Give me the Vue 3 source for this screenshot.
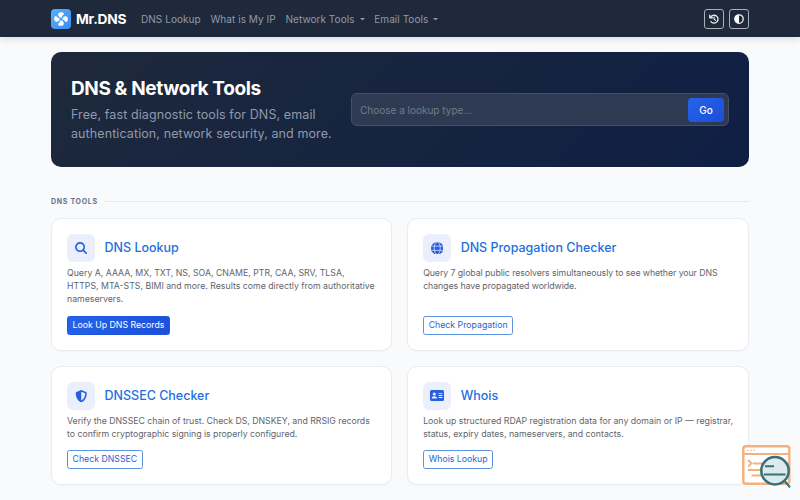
<script setup>
const cards = [
  { icon: 'search', title: 'DNS Lookup', tracking: 0, lines: ['Query A, AAAA, MX, TXT, NS, SOA, CNAME, PTR, CAA, SRV, TLSA,', 'HTTPS, MTA-STS, BIMI and more. Results come directly from authoritative', 'nameservers.'], action: 'Look Up DNS Records', primary: true },
  { icon: 'globe', title: 'DNS Propagation Checker', tracking: -0.065, lines: ['Query 7 global public resolvers simultaneously to see whether your DNS', 'changes have propagated worldwide.'], action: 'Check Propagation' },
  { icon: 'shield', title: 'DNSSEC Checker', tracking: -0.02, lines: ['Verify the DNSSEC chain of trust. Check DS, DNSKEY, and RRSIG records', 'to confirm cryptographic signing is properly configured.'], action: 'Check DNSSEC' },
  { icon: 'card', title: 'Whois', tracking: 0, lines: ['Look up structured RDAP registration data for any domain or IP — registrar,', 'status, expiry dates, nameservers, and contacts.'], action: 'Whois Lookup' }
]
</script>

<template>
  <div class="page">
    <header class="navbar">
      <a class="brand">
        <svg class="logo" viewBox="0 0 32 32">
          <defs>
            <linearGradient id="logo-fill" x1="0" y1="0" x2="1" y2="1">
              <stop offset="0" stop-color="#55b1fa" />
              <stop offset="1" stop-color="#3b8bee" />
            </linearGradient>
          </defs>
          <rect width="32" height="32" rx="6.5" fill="url(#logo-fill)" />
          <g fill="#fff">
            <path v-for="a in [0, 90, 180, 270]" :key="a" :transform="`rotate(${a} 16 16)`" d="M14.8 13.8C10.6 12.2 10.2 6.6 14.3 5.3C18.5 4.3 21.6 6.6 20.6 8.5C19.8 9.9 17.6 9.8 17.2 13.6Z" />
          </g>
        </svg>
        <span>Mr.DNS</span>
      </a>
      <nav class="links">
        <a>DNS Lookup</a>
        <a>What is My IP</a>
        <a>Network Tools<i class="caret"></i></a>
        <a>Email Tools<i class="caret"></i></a>
      </nav>
      <div class="tools">
        <button class="tool" aria-label="History">
          <svg viewBox="0 0 16 16" fill="none" stroke="currentColor" stroke-width="2" stroke-linecap="round" stroke-linejoin="round">
            <path d="M2.6 5.2A6.3 6.3 0 1 1 3.2 12.1" />
            <path d="M1.3 1.8V6H5.5" />
            <path d="M8.1 4.6V8.2L10.4 10.2" stroke-width="1.7" />
          </svg>
        </button>
        <button class="tool" aria-label="Theme">
          <svg viewBox="0 0 16 16">
            <circle cx="8" cy="8" r="6.8" fill="none" stroke="currentColor" stroke-width="2" />
            <path d="M8 1.2A6.8 6.8 0 0 0 8 14.8Z" fill="currentColor" />
          </svg>
        </button>
      </div>
    </header>

    <main class="container">
      <section class="hero">
        <div class="intro">
          <h1>DNS &amp; Network Tools</h1>
          <p>Free, fast diagnostic tools for DNS, email<br />authentication, network security, and more.</p>
        </div>
        <div class="lookup">
          <span>Choose a lookup type...</span>
          <button>Go</button>
        </div>
      </section>

      <h2 class="section-label">DNS TOOLS</h2>

      <section class="grid">
        <article v-for="card in cards" :key="card.title" class="card">
          <div class="heading">
            <span class="icon">
              <svg v-if="card.icon === 'search'" viewBox="0 0 16 16" fill="none" stroke="currentColor" stroke-width="2.1" stroke-linecap="round">
                <circle cx="6.5" cy="6.5" r="5.4" />
                <path d="M10.5 10.5L15 15" />
              </svg>
              <svg v-else-if="card.icon === 'globe'" viewBox="0 0 16 16">
                <circle cx="8" cy="8" r="8" fill="currentColor" />
                <g fill="none" stroke="#ebeffc" stroke-width=".9">
                  <ellipse cx="8" cy="8" rx="3.8" ry="8.2" />
                  <path d="M.8 5.3H15.2M.8 10.7H15.2" />
                </g>
              </svg>
              <svg v-else-if="card.icon === 'shield'" viewBox="0 0 16 16">
                <path d="M8 0L14.2 2.6C14.8 2.9 15.1 3.4 15.1 4C15 8.2 13.3 13.3 8.7 15.8Q8 16.2 7.3 15.8C2.7 13.3 1 8.2.9 4C.9 3.4 1.2 2.9 1.8 2.6ZM8 2.1V13.8C11.5 11.9 13 8.1 13.1 4.3Z" fill="currentColor" fill-rule="evenodd" />
              </svg>
              <svg v-else class="wide" viewBox="0 0 18 14">
                <rect width="18" height="14" rx="2" fill="currentColor" />
                <g fill="#ebeffc">
                  <circle cx="5.5" cy="5" r="2" />
                  <path d="M2 11Q2 8 5 8H6Q9 8 9 11ZM11 4H16V5.1H11ZM11 6.5H16V7.6H11ZM11 9H16V10.1H11Z" />
                </g>
              </svg>
            </span>
            <h3>{{ card.title }}</h3>
          </div>
          <p :style="{ letterSpacing: card.tracking + 'px' }"><span v-for="line in card.lines" :key="line">{{ line }}</span></p>
          <a class="action" :class="{ primary: card.primary }">{{ card.action }}</a>
        </article>
      </section>
    </main>

    <svg class="badge" viewBox="0 0 50 45" fill="none">
      <rect x="2.3" y="2.3" width="46" height="37.4" rx="2.5" fill="#fff" stroke="#f4b17d" stroke-width="2.4" />
      <path d="M2.5 10H48" stroke="#f4b17d" stroke-width="1.8" />
      <path d="M6 6.4H7.4M9.3 6.4H10.7M12.6 6.4H14" stroke="#f4b17d" stroke-width="1.4" />
      <path d="M7 16L10.5 19.3L7 22.6M12 19.5H21M7 26H20M10.5 31.5H20" stroke="#f4b17d" stroke-width="1.9" />
      <circle cx="34" cy="26.7" r="13.7" fill="#dce9ed" stroke="#397078" stroke-width="2.5" />
      <path d="M24 22.2H33M23 30.5H44.5M43.7 37L49 43.4" stroke="#397078" stroke-width="2.1" />
    </svg>
  </div>
</template>

<style>
body { margin: 0; overflow: hidden; }
</style>

<style scoped>
* { box-sizing: border-box; }
.page { position: relative; height: 500px; overflow: hidden; background: #f8fafc; font-family: Inter, "Liberation Sans", sans-serif; font-size: 10px; }
h1, h2, h3, p { margin: 0; }
button { font-family: inherit; padding: 0; }
.navbar { display: flex; align-items: center; height: 37px; padding: 0 51px; background: #1e293b; box-shadow: 0 1px 8px rgba(15, 23, 42, .16); }
.brand { display: flex; align-items: center; gap: 5px; width: 90px; color: #fff; font-size: 13.75px; font-weight: 700; letter-spacing: -.2px; }
.logo { width: 20px; height: 20px; flex: none; }
.links { display: flex; gap: 9.8px; color: #929aa7; font-size: 10px; letter-spacing: .05px; }
.links a { display: flex; align-items: center; white-space: nowrap; }
.caret { margin-left: 5px; margin-top: 1px; border-top: 2.5px solid currentColor; border-left: 2.5px solid transparent; border-right: 2.5px solid transparent; width: 5px; }
.tools { display: flex; gap: 5px; margin-left: auto; }
.tool { display: grid; place-items: center; width: 20px; height: 20px; border: 1px solid #a9b0ba; border-radius: 3px; background: transparent; color: #f8fafc; }
.tool svg { width: 10px; height: 10px; }
.container { padding: 15px 51px 0; }
.hero { display: flex; align-items: center; height: 115px; padding: 0 20px; border-radius: 10px; background: linear-gradient(135deg, #1e293b 0%, #0f1f44 100%); }
.intro { width: 280px; padding-top: 2px; }
.hero h1 { color: #fff; font-size: 19px; font-weight: 700; line-height: 24px; letter-spacing: -.38px; white-space: nowrap; }
.hero p { margin-top: 5px; color: #909aab; font-size: 12.5px; line-height: 18.75px; letter-spacing: .1px; white-space: nowrap; }
.lookup { display: flex; align-items: center; justify-content: space-between; flex: 1; height: 33px; padding: 0 4px 0 8px; border: 1px solid #43506a; border-radius: 6px; background: #2e3a51; color: #707b8c; font-size: 10px; }
.lookup button { width: 36px; height: 24px; border: 0; border-radius: 4px; background: linear-gradient(135deg, #2563eb, #1d4ed8); color: #fff; font-size: 10px; font-weight: 500; }
.section-label { display: flex; align-items: center; gap: 7px; margin-top: 28px; height: 13px; color: #64748b; font-size: 7px; font-weight: 700; letter-spacing: .7px; white-space: nowrap; }
.section-label::after { content: ""; flex: 1; height: 1px; background: #e2e8f0; }
.grid { display: grid; grid-template-columns: 1fr 1fr; grid-template-rows: 133px 119px; gap: 15px; margin-top: 10px; }
.card { display: flex; flex-direction: column; align-items: flex-start; padding: 15px; border: 1px solid #e8edf3; border-radius: 10px; background: #fff; box-shadow: 0 1px 2px rgba(15, 23, 42, .03); }
.heading { display: flex; align-items: center; gap: 10px; }
.icon { display: grid; place-items: center; width: 27.5px; height: 27.5px; border-radius: 6px; background: #ebeffc; color: #285fdf; }
.icon svg { width: 12.5px; height: 12.5px; }
.icon svg.wide { width: 14px; height: 11px; }
h3 { color: #1d6fe0; font-size: 12.5px; font-weight: 500; line-height: 15px; }
.card p { margin-top: 5px; color: #5f656c; font-size: 8.75px; line-height: 13.1px; }
.card p span { display: block; white-space: nowrap; }
.action { display: flex; align-items: center; margin-top: auto; height: 19.4px; padding: 0 4.5px; border: 1px solid #5b93e3; border-radius: 2.5px; color: #2563d9; font-size: 8.75px; white-space: nowrap; }
.action.primary { border-color: #1d55dc; background: linear-gradient(135deg, #2563eb, #1d4ed8); color: #fff; }
.badge { position: absolute; left: 741px; top: 444px; width: 50px; height: 45px; }
</style>
